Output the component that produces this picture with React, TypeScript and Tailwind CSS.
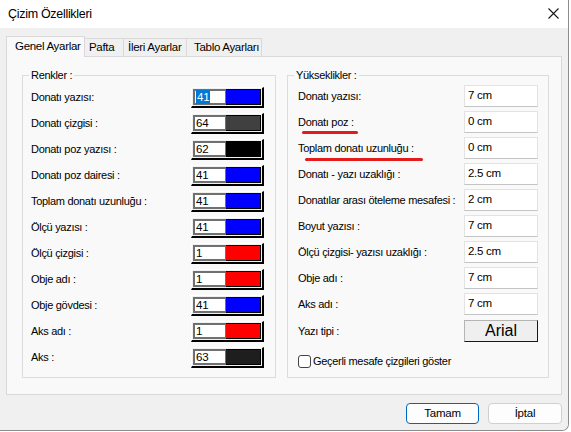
import React from 'react';

// ─── Data ──────────────────────────────────────────────

const colorRows = [
  { label: 'Donatı yazısı:', value: '41', color: '#0000ff', selected: true },
  { label: 'Donatı çizgisi :', value: '64', color: '#404040' },
  { label: 'Donatı poz yazısı :', value: '62', color: '#000000' },
  { label: 'Donatı poz dairesi :', value: '41', color: '#0000ff' },
  { label: 'Toplam donatı uzunluğu :', value: '41', color: '#0000ff' },
  { label: 'Ölçü yazısı :', value: '41', color: '#0000ff' },
  { label: 'Ölçü çizgisi :', value: '1', color: '#ff0000' },
  { label: 'Obje adı :', value: '1', color: '#ff0000' },
  { label: 'Obje gövdesi :', value: '41', color: '#0000ff' },
  { label: 'Aks adı :', value: '1', color: '#ff0000' },
  { label: 'Aks :', value: '63', color: '#1e1e1e' },
];

const heightRows = [
  { label: 'Donatı yazısı:', value: '7 cm' },
  { label: 'Donatı poz :', value: '0 cm', mark: 'short' },
  { label: 'Toplam donatı uzunluğu :', value: '0 cm', mark: 'long' },
  { label: 'Donatı - yazı uzaklığı :', value: '2.5 cm' },
  { label: 'Donatılar arası öteleme mesafesi :', value: '2 cm' },
  { label: 'Boyut yazısı :', value: '7 cm' },
  { label: 'Ölçü çizgisi- yazısı uzaklığı :', value: '2.5 cm' },
  { label: 'Obje adı :', value: '7 cm' },
  { label: 'Aks adı :', value: '7 cm' },
];

const tabs = [
  { label: 'Genel Ayarlar', active: true, cls: 'w-[79px] pl-[8px]' },
  { label: 'Pafta', cls: 'w-[39px] pl-[4px]' },
  { label: 'İleri Ayarlar', cls: 'w-[63px] pl-[4px]' },
  { label: 'Tablo Ayarları', cls: 'w-[75px] pl-[7px]' },
];

const label = "text-[11px] tracking-[-0.3px] text-black leading-[13px] whitespace-nowrap";

// ─── Group box ─────────────────────────────────────────

function GroupBox({ title, className, children }: { title: string; className: string; children: React.ReactNode }) {
  return (
    <div className={`relative border border-[#dcdcdc] ${className}`}>
      <span className={`absolute -top-[7px] left-[6px] bg-[#f9f9f9] px-[2px] ${label}`}>{title}</span>
      {children}
    </div>
  );
}

// ─── Main ──────────────────────────────────────────────

export default function App() {
  return (
    <div className="w-[571px] h-[432px] bg-white overflow-hidden font-['Liberation_Sans',Arial,sans-serif]">
      <div className="w-[569px] h-[431px] flex flex-col border-r border-b border-[#8c8c8c] rounded-br-[7px] overflow-hidden">
        {/* Title bar */}
        <div className="h-[28px] shrink-0 bg-white flex items-center justify-between pl-[8px] pr-[9px]">
          <span className="text-[12.5px] tracking-[-0.3px] text-black">Çizim Özellikleri</span>
          <svg width="11" height="11" viewBox="0 0 11 11" className="mt-[-2px]">
            <path d="M0.5 0.5 L10.5 10.5 M10.5 0.5 L0.5 10.5" stroke="#1a1a1a" strokeWidth="1.1" />
          </svg>
        </div>

        {/* Body */}
        <div className="flex-1 bg-[#f0f0f0] px-[6px] pt-[8px] flex flex-col">
          {/* Tabs */}
          <div className="h-[20px] flex items-end relative z-10">
            {tabs.map((t) =>
              t.active ? (
                <div
                  key={t.label}
                  className={`${t.cls} shrink-0 whitespace-nowrap h-[21px] -mb-px bg-[#f9f9f9] border border-b-0 border-[#d9d9d9] flex items-center text-[11.5px] tracking-[-0.3px] text-black`}
                >
                  {t.label}
                </div>
              ) : (
                <div
                  key={t.label}
                  className={`${t.cls} shrink-0 whitespace-nowrap overflow-hidden h-[18px] bg-[#f0f0f0] border border-l-0 border-b-0 border-[#d9d9d9] flex items-center text-[11.5px] tracking-[-0.3px] text-black`}
                >
                  {t.label}
                </div>
              )
            )}
          </div>

          {/* Tab panel */}
          <div className="w-[556px] h-[339px] bg-[#f9f9f9] border border-[#d9d9d9] pl-[15px] pt-[18px] flex gap-[11px]">
            <GroupBox title="Renkler :" className="w-[254px] h-[303px] pl-[8px] pr-[11px] pt-[11px]">
              <div className="flex flex-col gap-[5px]">
                {colorRows.map((r, i) => (
                  <div key={i} className="h-[21px] flex items-center justify-between">
                    <span className={label}>{r.label}</span>
                    <div className="w-[73px] h-[21px] border-t border-l border-t-white border-l-white border-r-2 border-b-2 border-r-black border-b-black bg-[#f0f0f0] p-px flex">
                      <div className="w-[33px] h-full bg-white border-2 border-r border-[#707070] flex items-center pl-px">
                        {r.selected ? (
                          <span className="bg-[#0078d7] text-white text-[11.5px] leading-[14px] tracking-[-0.2px] px-px">{r.value}</span>
                        ) : (
                          <span className="text-black text-[11.5px] leading-[14px] tracking-[-0.2px]">{r.value}</span>
                        )}
                      </div>
                      <div className="flex-1 h-full border border-l-0 border-black" style={{ backgroundColor: r.color }} />
                    </div>
                  </div>
                ))}
              </div>
            </GroupBox>

            <GroupBox title="Yükseklikler :" className="w-[262px] h-[303px] pl-[10px] pr-[10px] pt-[9px]">
              <div className="flex flex-col gap-[4px]">
                {heightRows.map((r, i) => (
                  <div key={i} className="relative h-[22px] flex items-center justify-between">
                    <span className={label}>{r.label}</span>
                    <div className="w-[74px] h-[22px] bg-white border border-[#e3e3e3] border-b-[#c4c4c4] flex items-start pl-[3px] pt-[3px]">
                      <span className="text-[11.5px] tracking-[-0.3px] text-black leading-[13px]">{r.value}</span>
                    </div>
                    {r.mark === 'short' && (
                      <span className="absolute left-[4px] top-[20px] w-[56px] h-[3px] rounded-full bg-[#e41b1b]" />
                    )}
                    {r.mark === 'long' && (
                      <span className="absolute left-[7px] top-[21px] w-[118px] h-[3px] rounded-full bg-[#e41b1b]" />
                    )}
                  </div>
                ))}
                <div className="h-[22px] flex items-center justify-between mt-[1px]">
                  <span className={label}>Yazı tipi :</span>
                  <div className="w-[74px] h-[22px] bg-[#efefef] border border-[#b4b4b4] border-r-[#1a1a1a] border-b-[#1a1a1a] flex items-center justify-center">
                    <span className="text-[16px] leading-[18px] text-black">Arial</span>
                  </div>
                </div>
                <div className="flex items-center gap-[2px] mt-[9px]">
                  <span className="w-[13px] h-[13px] rounded-[3px] border border-[#444] bg-white" />
                  <span className={label}>Geçerli mesafe çizgileri göster</span>
                </div>
              </div>
            </GroupBox>
          </div>

          {/* Buttons */}
          <div className="flex justify-end gap-[9px] mt-[8px]">
            <button className="w-[73px] h-[21px] rounded-[4px] bg-[#fdfdfd] border border-[#0067c0] text-[11.5px] tracking-[-0.2px] text-black">
              Tamam
            </button>
            <button className="w-[74px] h-[21px] rounded-[4px] bg-[#fdfdfd] border border-[#d0d0d0] text-[11.5px] tracking-[-0.2px] text-black">
              İptal
            </button>
          </div>
        </div>
      </div>
    </div>
  );
}
